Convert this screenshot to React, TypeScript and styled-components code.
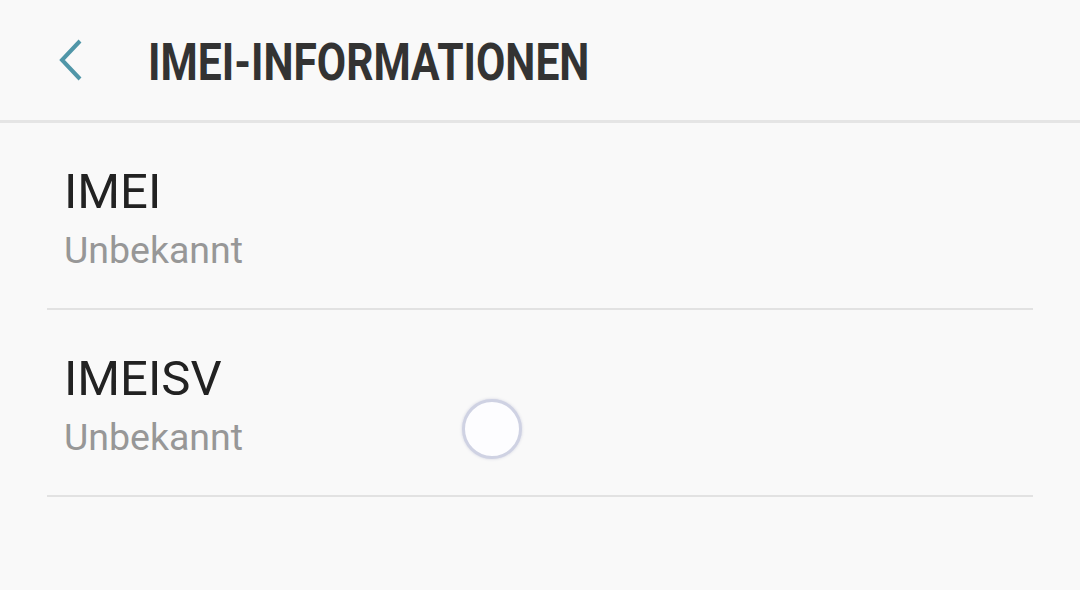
import React from "react";
import styled, { createGlobalStyle } from "styled-components";

const GlobalStyle = createGlobalStyle`
  html, body {
    margin: 0;
    padding: 0;
    background: #f9f9f9;
  }
  body {
    font-family: Roboto, "Liberation Sans", sans-serif;
  }
`;

const Screen = styled.div`
  position: relative;
  width: 1080px;
  height: 590px;
  background: #f9f9f9;
  overflow: hidden;
`;

const Header = styled.header`
  height: 120px;
  display: flex;
  align-items: center;
  padding-left: 57px;
  border-bottom: 3px solid #e5e5e5;
  box-sizing: content-box;
`;

const BackButton = styled.button`
  display: flex;
  align-items: center;
  justify-content: center;
  width: 28px;
  height: 44px;
  padding: 0;
  margin: 0;
  border: none;
  background: transparent;
`;

// Roboto Condensed isn't installed, so squeeze Roboto Bold horizontally
const Title = styled.h1`
  margin: 0 0 0 63px;
  padding-top: 4px;
  font-family: Roboto, "Liberation Sans", sans-serif;
  font-weight: 700;
  font-size: 51px;
  line-height: 1;
  color: #333333;
  transform: scaleX(0.835);
  transform-origin: left center;
  white-space: nowrap;
`;

const List = styled.div`
  display: flex;
  flex-direction: column;
`;

const Row = styled.div`
  display: flex;
  flex-direction: column;
  padding: 44px 64px 39px;
`;

const Label = styled.div`
  font-family: Roboto, "Liberation Sans", sans-serif;
  font-size: 49px;
  line-height: 50px;
  color: #222222;
`;

const Value = styled.div`
  margin-top: 15px;
  font-family: Roboto, "Liberation Sans", sans-serif;
  font-size: 37.5px;
  line-height: 37px;
  color: #979797;
`;

const Divider = styled.div`
  height: 2px;
  margin: 0 47px;
  background: #e2e2e2;
`;

const Spinner = styled.div`
  position: absolute;
  left: 462px;
  top: 399px;
  width: 54px;
  height: 54px;
  border-radius: 50%;
  border: 3px solid #cfd2e3;
  background: #fdfdff;
  box-shadow: 0 0 3px rgba(160, 165, 195, 0.45);
`;

const rows = [
  { label: "IMEI", value: "Unbekannt" },
  { label: "IMEISV", value: "Unbekannt" },
];

export default function App() {
  return (
    <Screen>
      <GlobalStyle />
      <Header>
        <BackButton aria-label="Zurück">
          <svg width="28" height="44" viewBox="0 0 28 44" fill="none">
            <path
              d="M23 3 L5 22 L23 41"
              stroke="#5096a8"
              strokeWidth="4"
              strokeLinecap="butt"
              strokeLinejoin="miter"
            />
          </svg>
        </BackButton>
        <Title>IMEI-INFORMATIONEN</Title>
      </Header>
      <List>
        {rows.map((r) => (
          <React.Fragment key={r.label}>
            <Row>
              <Label>{r.label}</Label>
              <Value>{r.value}</Value>
            </Row>
            <Divider />
          </React.Fragment>
        ))}
      </List>
      <Spinner />
    </Screen>
  );
}
